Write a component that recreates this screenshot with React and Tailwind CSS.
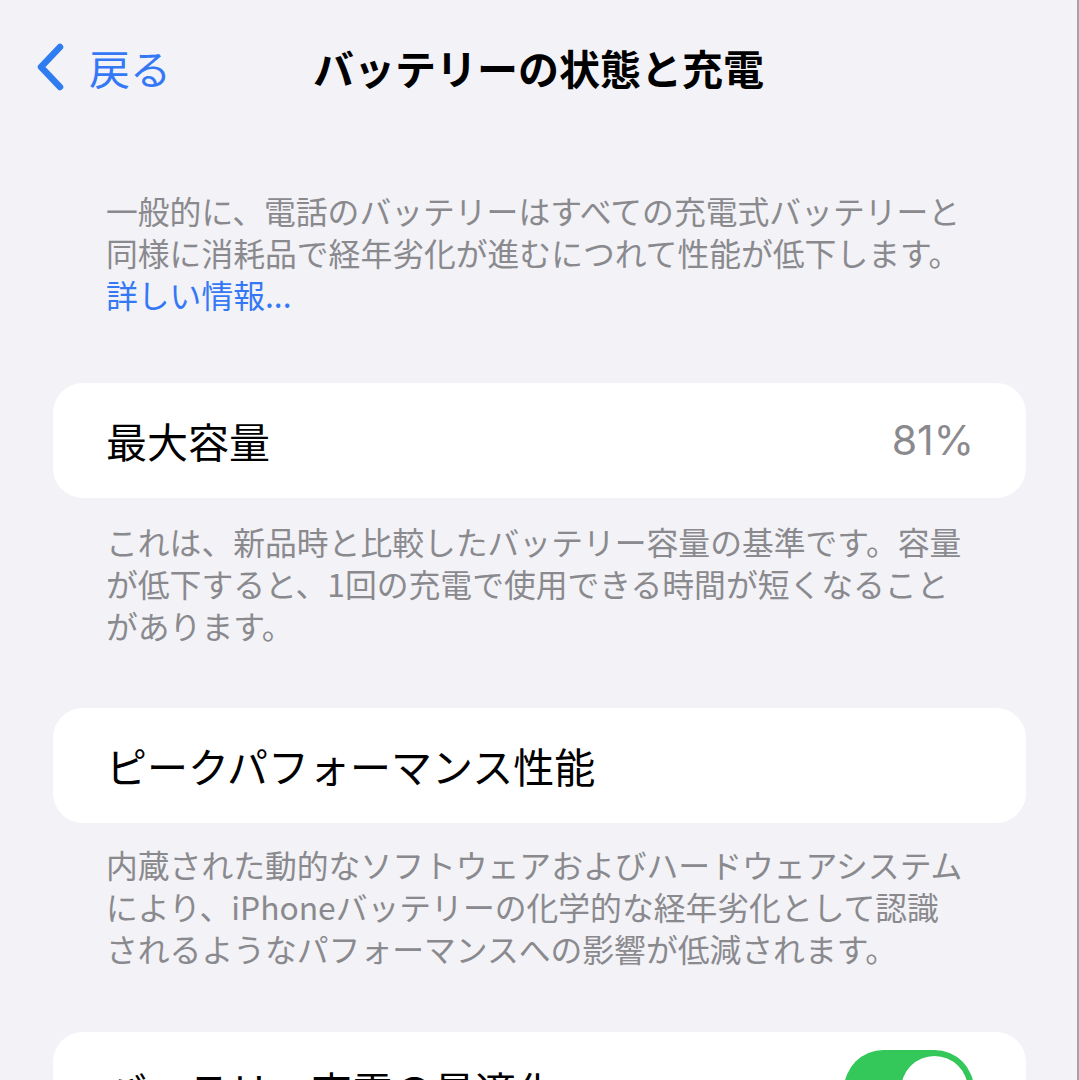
const jp = { fontFamily: '"Noto Sans CJK JP", "Noto Sans", sans-serif' };

function Card({ children }) {
  return (
    <div className="ml-[53px] mr-[51px] h-[115px] rounded-[30px] bg-white pl-[53px] pr-[52px] flex items-center justify-between">
      {children}
    </div>
  );
}

function Note({ children, className = "" }) {
  return (
    <p className={`px-[106px] text-[31.8px] leading-[42px] text-[#8a8a8e] whitespace-nowrap ${className}`}>
      {children}
    </p>
  );
}

export default function App() {
  return (
    <div
      className="w-[1079px] h-[1080px] overflow-hidden bg-[#f2f2f7] border-r-2 border-[#a4a4a8]"
      style={jp}
    >
      {/* nav bar */}
      <div className="h-[134px] grid grid-cols-[1fr_auto_1fr] items-center">
        <div className="flex items-center pl-[35px] gap-[24px] text-[#3478f6]">
          <svg width="30" height="48" viewBox="0 0 30 48" fill="none">
            <polyline
              points="25,4 6,24 25,44"
              stroke="#2f7cf0"
              strokeWidth="6.5"
              strokeLinecap="round"
              strokeLinejoin="round"
            />
          </svg>
          <span className="text-[41px] leading-none">戻る</span>
        </div>
        <h1 className="text-[41px] font-bold text-black leading-none">
          バッテリーの状態と充電
        </h1>
        <div />
      </div>

      <Note className="mt-[55px]">
        一般的に、電話のバッテリーはすべての充電式バッテリーと
        <br />
        同様に消耗品で経年劣化が進むにつれて性能が低下します。
        <br />
        <span className="text-[#3478f6]">詳しい情報...</span>
      </Note>

      <div className="mt-[68px]">
        <Card>
          <span className="text-[41px] text-black">最大容量</span>
          <span className="text-[41px] text-[#8a8a8e]" style={{ fontFamily: "Inter, sans-serif" }}>
            81%
          </span>
        </Card>
      </div>

      <Note className="mt-[22px]">
        これは、新品時と比較したバッテリー容量の基準です。容量
        <br />
        が低下すると、1回の充電で使用できる時間が短くなること
        <br />
        があります。
      </Note>

      <div className="mt-[62px]">
        <Card>
          <span className="text-[41px] text-black">ピークパフォーマンス性能</span>
        </Card>
      </div>

      <Note className="mt-[20px]">
        内蔵された動的なソフトウェアおよびハードウェアシステム
        <br />
        により、iPhoneバッテリーの化学的な経年劣化として認識
        <br />
        されるようなパフォーマンスへの影響が低減されます。
      </Note>

      <div className="mt-[63px]">
        <Card>
          <span className="text-[41px] text-black">バッテリー充電の最適化</span>
          <div className="w-[130px] h-[79px] rounded-full bg-[#34c759] p-[6px] flex justify-end">
            <div className="w-[67px] h-[67px] rounded-full bg-white shadow" />
          </div>
        </Card>
      </div>
    </div>
  );
}
